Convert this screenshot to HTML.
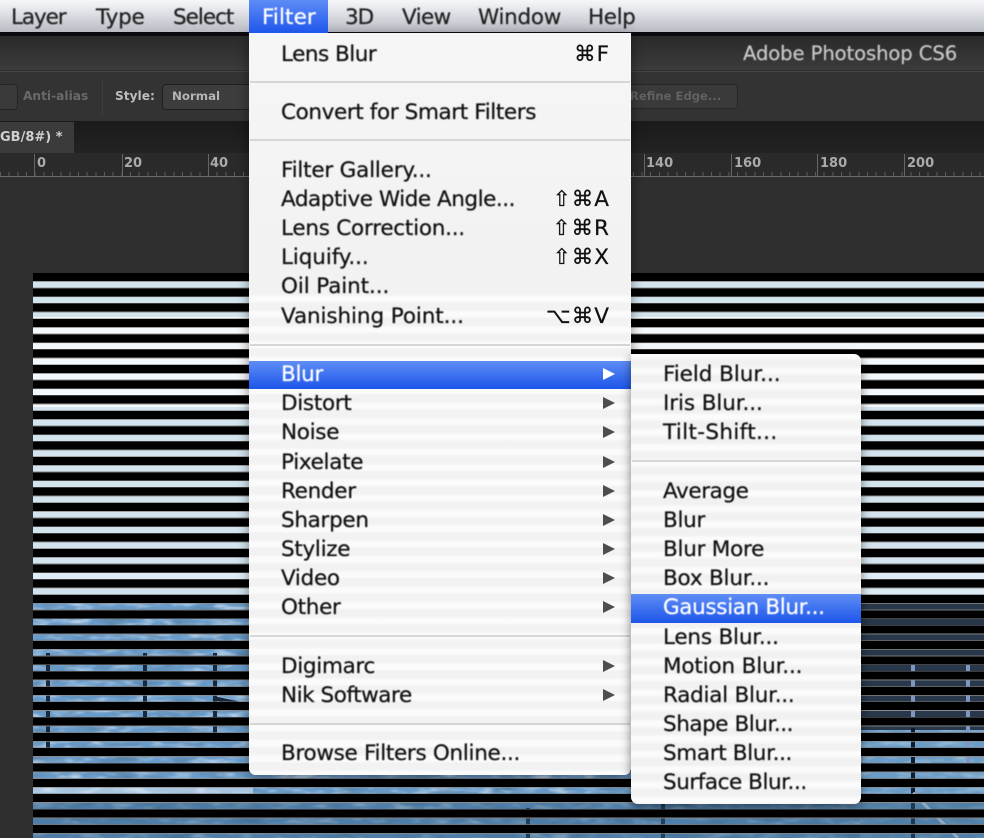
<!DOCTYPE html>
<html>
<head>
<meta charset="utf-8">
<style>
html,body{margin:0;padding:0;width:984px;height:838px;overflow:hidden;background:#2f2f2f}
body{position:relative;font-family:"DejaVu Sans","Liberation Sans",sans-serif}
.a{position:absolute;white-space:nowrap}
#bar{left:0;top:0;width:984px;height:32px;background:linear-gradient(#f6f7f9,#e2e4ea 35%,#b9bcc4)}
#blk{left:0;top:32px;width:984px;height:4px;background:#0a0a10}
#title{left:0;top:36px;width:984px;height:34px;background:linear-gradient(#2a2a2a,#3b3b3b)}
#opts{left:0;top:71px;width:984px;height:49px;background:#333;border-top:1px solid #444}
#tabs{left:0;top:121px;width:984px;height:32px;background:linear-gradient(#1a1a1a,#232323)}
#tab{left:0;top:122px;width:74px;height:31px;background:#3b3b3b}
#ruler{left:0;top:153px;width:984px;height:24px;background:#2a2a2a;border-bottom:1px solid #6b6b6b;box-sizing:border-box}
#ticks{left:0;top:172px;width:984px;height:4px;background:repeating-linear-gradient(90deg,#5c5c5c 0 1px,transparent 1px 8.67px)}
.rt{top:154px;width:1px;height:22px;background:#666}
.rn{top:156px;font:bold 13px/16px "DejaVu Sans",sans-serif;color:#aaa;filter:blur(.3px)}
.m{font-size:21.5px;line-height:30px;margin-top:1px;color:#111;letter-spacing:-.3px;-webkit-text-stroke:.25px currentColor;filter:blur(.4px)}
.w{color:#fff}
.s{left:281px}
.u{left:663px}
.k{font-size:21.5px;line-height:30px;margin-top:1px;color:#111;right:374px;letter-spacing:1px;-webkit-text-stroke:.25px currentColor;filter:blur(.35px)}
.sep{height:2px;background:#d6d6d6}
.tri{position:absolute;left:603px;width:0;height:0;border-left:12px solid #4e4e4e;border-top:6.5px solid transparent;border-bottom:6.5px solid transparent;filter:blur(.3px)}
.hl{background:linear-gradient(#5f8df5,#1c55ea)}
#menu{left:249px;top:33px;width:382px;height:742px;border-radius:0 0 7px 7px;box-shadow:0 3px 12px rgba(0,0,0,.45);
background:linear-gradient(#f6f6f6,#f2f2f2 30%,#f3f3f3)}
#mstr{left:249px;top:288px;width:382px;height:487px;border-radius:0 0 7px 7px;background:repeating-linear-gradient(#f2f2f2 0,#f2f2f2 6px,#fbfbfb 9px,#fbfbfb 13px,#f2f2f2 15.33px)}
#sub{left:631px;top:354px;width:230px;height:450px;border-radius:0 7px 7px 7px;box-shadow:0 3px 10px rgba(0,0,0,.5);background:repeating-linear-gradient(#fbfbfb 0,#fbfbfb 3px,#f1f1f1 7px,#f1f1f1 12px,#fbfbfb 15.33px)}
</style>
</head>
<body>
<div class="a" id="bar"></div>
<div class="a" id="blk"></div>
<div class="a" id="title"></div>
<div class="a" id="opts"></div>
<div class="a" id="tabs"></div>
<div class="a" id="tab"></div>
<div class="a" id="ruler"></div>
<div class="a" id="ticks"></div>

<div class="a" style="left:743px;top:41px;font:19.6px/26px 'DejaVu Sans',sans-serif;color:#c9c9c9;letter-spacing:-.1px;-webkit-text-stroke:.2px currentColor;filter:blur(.4px)">Adobe Photoshop CS6</div>

<div class="a" style="left:-8px;top:84px;width:24px;height:24px;border:1px solid #252525;border-radius:4px;background:#3a3a3a"></div>
<div class="a" style="left:23px;top:88px;font:bold 12.2px/17px 'DejaVu Sans',sans-serif;color:#696969;filter:blur(.3px)">Anti-alias</div>
<div class="a" style="left:102px;top:80px;width:1px;height:35px;background:#3e3e3e"></div>
<div class="a" style="left:115px;top:88px;font:bold 12.2px/17px 'DejaVu Sans',sans-serif;color:#bdbdbd;filter:blur(.3px)">Style:</div>
<div class="a" style="left:162px;top:84px;width:90px;height:24px;border:1px solid #1f1f1f;border-radius:4px;background:#3d3d3d"></div>
<div class="a" style="left:172px;top:88px;font:bold 11.8px/17px 'DejaVu Sans',sans-serif;color:#b5b5b5;filter:blur(.3px)">Normal</div>
<div class="a" style="left:620px;top:84px;width:116px;height:23px;border:1px solid #272727;border-radius:4px;background:#3a3a3a"></div>
<div class="a" style="left:630px;top:88px;font:bold 11.6px/17px 'DejaVu Sans',sans-serif;color:#626262;filter:blur(.3px)">Refine Edge...</div>
<div class="a" style="left:0;top:129px;font:bold 13px/17px 'DejaVu Sans',sans-serif;color:#d0d0d0;filter:blur(.3px)">GB/8#) *</div>

<div class="a rt" style="left:34px"></div><div class="a rn" style="left:37px">0</div>
<div class="a rt" style="left:122px"></div><div class="a rn" style="left:124px">20</div>
<div class="a rt" style="left:208px"></div><div class="a rn" style="left:210px">40</div>
<div class="a rt" style="left:644px"></div><div class="a rn" style="left:646px">140</div>
<div class="a rt" style="left:731px"></div><div class="a rn" style="left:734px">160</div>
<div class="a rt" style="left:817px"></div><div class="a rn" style="left:820px">180</div>
<div class="a rt" style="left:904px"></div><div class="a rn" style="left:907px">200</div>

<!-- photo -->
<svg class="a" style="left:33px;top:273px" width="951" height="565" viewBox="0 0 951 565">
<defs>
<filter id="n" x="0" y="0" width="100%" height="100%"><feTurbulence type="fractalNoise" baseFrequency=".03 .1" numOctaves="3" seed="7"/><feColorMatrix values="0 0 0 0 .1  0 0 0 0 .24  0 0 0 0 .42  2.6 0 0 0 -1.1"/></filter>
<filter id="l" x="0" y="0" width="100%" height="100%"><feTurbulence type="fractalNoise" baseFrequency=".05 .15" numOctaves="2" seed="3"/><feColorMatrix values="0 0 0 0 .78  0 0 0 0 .88  0 0 0 0 .96  3 0 0 0 -1.3"/></filter>
</defs>
<rect width="951" height="565" fill="#d3e4ee"/>
<rect y="44" width="951" height="90" fill="#f5f8fa"/>
<rect y="300" width="951" height="30" fill="#e0edf4"/>
<rect y="316" width="300" height="15" fill="#cfe2ee"/>
<rect x="0" y="330" width="951" height="235" fill="#6a9ccb"/>
<rect x="560" y="315" width="391" height="15" fill="#dcebf3"/>
<rect x="0" y="330" width="827" height="235" filter="url(#l)" opacity=".6"/>
<rect x="0" y="330" width="827" height="235" filter="url(#n)"/>
<rect x="827" y="330" width="124" height="127" fill="#28384a"/>
<rect x="827" y="457" width="124" height="108" fill="#6b9cc6"/>
<rect x="827" y="457" width="124" height="108" filter="url(#l)" opacity=".3"/>
<path d="M15 380V480M112 380V450M182 380V460M180 425L250 440M630 360V565M495 535V590" stroke="#17273c" stroke-width="4" fill="none"/>
<path d="M880 455V565" stroke="#0f1c2e" stroke-width="4" fill="none"/>
<path d="M880 385V450M935 385V450M935 450V500" stroke="#7d97c0" stroke-width="4" fill="none"/>
<path d="M880 520L925 565" stroke="#dfeaf4" stroke-width="3" fill="none"/>
<rect x="0" y="505" width="220" height="20" fill="#d8e6f2" opacity=".6"/>
<rect x="0" y="525" width="951" height="40" fill="#2f5a80" opacity=".45"/>
</svg>
<div class="a" style="left:33px;top:273px;width:951px;height:565px;background:repeating-linear-gradient(#000 0 8px,#8c8c8c 8px 8.6px,transparent 9px 14.6px,#777 14.8px 15.33px)"></div>

<!-- filter menu -->
<div class="a" id="menu"></div>
<div class="a" id="mstr"></div>
<div class="a hl" style="left:249px;top:0;width:79px;height:33px;background:linear-gradient(#5d8cf6,#1f56ec)"></div>

<div class="a m" style="left:11px;top:2px;color:#222;letter-spacing:-1.1px">Layer</div>
<div class="a m" style="left:96px;top:2px;color:#222;letter-spacing:-.2px">Type</div>
<div class="a m" style="left:173px;top:2px;color:#222;letter-spacing:-1px">Select</div>
<div class="a m w" style="left:262px;top:2px;letter-spacing:.1px">Filter</div>
<div class="a m" style="left:345px;top:2px;color:#222;letter-spacing:-1px">3D</div>
<div class="a m" style="left:402px;top:2px;color:#222;letter-spacing:-.6px">View</div>
<div class="a m" style="left:478px;top:2px;color:#222;letter-spacing:-.3px">Window</div>
<div class="a m" style="left:588px;top:2px;color:#222;letter-spacing:-.4px">Help</div>

<div class="a sep" style="left:250px;top:81px;width:380px"></div>
<div class="a sep" style="left:250px;top:139px;width:380px"></div>
<div class="a sep" style="left:250px;top:344px;width:380px"></div>
<div class="a sep" style="left:250px;top:635px;width:380px"></div>
<div class="a sep" style="left:250px;top:723px;width:380px"></div>

<div class="a m s" style="top:39px;letter-spacing:-.5px">Lens Blur</div>
<div class="a k" style="top:39px">⌘F</div>
<div class="a m s" style="top:97px;letter-spacing:-.38px">Convert for Smart Filters</div>
<div class="a m s" style="top:155px;letter-spacing:-.2px">Filter Gallery...</div>
<div class="a m s" style="top:184px;letter-spacing:-.46px">Adaptive Wide Angle...</div>
<div class="a k" style="top:184px">⇧⌘A</div>
<div class="a m s" style="top:213px;letter-spacing:-.24px">Lens Correction...</div>
<div class="a k" style="top:213px">⇧⌘R</div>
<div class="a m s" style="top:242px;letter-spacing:-.1px">Liquify...</div>
<div class="a k" style="top:242px">⇧⌘X</div>
<div class="a m s" style="top:271px;letter-spacing:-.1px">Oil Paint...</div>
<div class="a m s" style="top:301px;letter-spacing:-.1px">Vanishing Point...</div>
<div class="a k" style="top:301px">⌥⌘V</div>

<div class="a hl" style="left:249px;top:361px;width:382px;height:28px"></div>
<div class="a m s w" style="top:359px">Blur</div>
<div class="tri" style="top:368px;border-left-color:#fff"></div>
<div class="a m s" style="top:388px">Distort</div><div class="tri" style="top:397px"></div>
<div class="a m s" style="top:417px">Noise</div><div class="tri" style="top:426px"></div>
<div class="a m s" style="top:447px">Pixelate</div><div class="tri" style="top:456px"></div>
<div class="a m s" style="top:476px">Render</div><div class="tri" style="top:485px"></div>
<div class="a m s" style="top:505px">Sharpen</div><div class="tri" style="top:514px"></div>
<div class="a m s" style="top:534px">Stylize</div><div class="tri" style="top:543px"></div>
<div class="a m s" style="top:563px">Video</div><div class="tri" style="top:572px"></div>
<div class="a m s" style="top:592px">Other</div><div class="tri" style="top:601px"></div>
<div class="a m s" style="top:651px">Digimarc</div><div class="tri" style="top:660px"></div>
<div class="a m s" style="top:680px;letter-spacing:-.45px">Nik Software</div><div class="tri" style="top:689px"></div>
<div class="a m s" style="top:738px;letter-spacing:-.3px">Browse Filters Online...</div>

<!-- blur submenu -->
<div class="a" id="sub"></div>
<div class="a sep" style="left:632px;top:460px;width:228px"></div>
<div class="a hl" style="left:631px;top:594px;width:230px;height:29px"></div>
<div class="a m u" style="top:359px;letter-spacing:-.05px">Field Blur...</div>
<div class="a m u" style="top:388px;letter-spacing:-.1px">Iris Blur...</div>
<div class="a m u" style="top:417px;letter-spacing:.35px">Tilt-Shift...</div>
<div class="a m u" style="top:476px;letter-spacing:-.4px">Average</div>
<div class="a m u" style="top:505px">Blur</div>
<div class="a m u" style="top:534px;letter-spacing:-.25px">Blur More</div>
<div class="a m u" style="top:563px;letter-spacing:-.2px">Box Blur...</div>
<div class="a m u w" style="top:592px;letter-spacing:-.35px">Gaussian Blur...</div>
<div class="a m u" style="top:622px;letter-spacing:-.2px">Lens Blur...</div>
<div class="a m u" style="top:651px;letter-spacing:-.15px">Motion Blur...</div>
<div class="a m u" style="top:680px;letter-spacing:-.25px">Radial Blur...</div>
<div class="a m u" style="top:709px;letter-spacing:-.45px">Shape Blur...</div>
<div class="a m u" style="top:738px;letter-spacing:-.35px">Smart Blur...</div>
<div class="a m u" style="top:767px;letter-spacing:-.45px">Surface Blur...</div>
</body>
</html>
